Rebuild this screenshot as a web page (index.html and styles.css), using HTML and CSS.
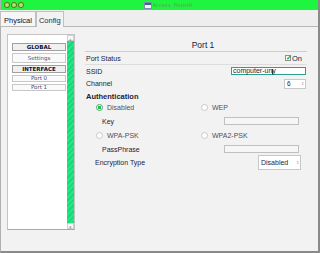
FILE: index.html
```html
<!DOCTYPE html>
<html lang="en">
<head>
  <meta charset="UTF-8" />
  <title>Access Point0</title>
  <link rel="stylesheet" href="styles.css">
</head>
<body>
  <div class="ventana">
    <div class="barra-titulo">
      <div class="botones">
        <span class="circulo"></span>
        <span class="circulo"></span>
        <span class="circulo"></span>
      </div>
      <div class="titulo">
        <span class="icono-ventana"></span>
        <span>Access Point0</span>
      </div>
    </div>

    <div class="pestanas">
      <div class="pestana">Physical</div>
      <div class="pestana activa">Config</div>
    </div>

    <div class="contenido">
      <div class="lateral">
        <div class="lista">
          <div class="item titulo-item">GLOBAL</div>
          <div class="item settings">Settings</div>
          <div class="item titulo-item">INTERFACE</div>
          <div class="item">Port 0</div>
          <div class="item">Port 1</div>
        </div>
        <div class="scroll">
          <div class="flecha">&#9652;</div>
          <div class="pista"></div>
          <div class="flecha">&#9662;</div>
        </div>
      </div>

      <div class="panel">
        <div class="encabezado">Port 1</div>

        <div class="fila linea">
          <span>Port Status</span>
          <label class="check"><span class="caja">&#10003;</span> On</label>
        </div>
        <div class="fila">
          <span>SSID</span>
          <span class="campo ssid">computer-uny<span class="cursor"></span></span>
        </div>
        <div class="fila">
          <span>Channel</span>
          <span class="selector canal">6 <span class="flechita">&#8661;</span></span>
        </div>

        <div class="subtitulo">Authentication</div>

        <div class="auth">
          <label class="opcion"><span class="radio marcado"></span>Disabled</label>
          <label class="opcion"><span class="radio"></span>WEP</label>

          <span class="etiqueta">Key</span>
          <span class="campo vacio"></span>

          <label class="opcion"><span class="radio"></span>WPA-PSK</label>
          <label class="opcion"><span class="radio"></span>WPA2-PSK</label>

          <span class="etiqueta">PassPhrase</span>
          <span class="campo vacio"></span>
        </div>

        <div class="fila cifrado">
          <span>Encryption Type</span>
          <span class="selector tipo">Disabled <span class="flechita">&#8661;</span></span>
        </div>
      </div>
    </div>
  </div>
</body>
</html>
```

FILE: styles.css
```css
body {
  margin: 0;
  padding: 0;
  font-family: "Liberation Sans", Arial, sans-serif;
  font-size: 7px;
  color: #1c1c3c;
  background: #f2f2f2;
  overflow: hidden;
}

.ventana {
  width: 320px;
  height: 253px;
  box-sizing: border-box;
  border-right: 2px solid #8a8a8a;
  border-bottom: 2px solid #8a8a8a;
  border-left: 1px solid #b0b0b0;
  background: #f2f2f2;
  display: flex;
  flex-direction: column;
}

.barra-titulo {
  height: 10px;
  background: #1ef53e;
  position: relative;
  display: flex;
  align-items: center;
}

.botones {
  display: flex;
  gap: 1px;
  padding-left: 3px;
}

.circulo {
  width: 6px;
  height: 6px;
  border-radius: 50%;
  background: #b6e070;
  box-shadow: inset 0 0 0 1px #4d7a1e;
}

.titulo {
  position: absolute;
  left: 144px;
  top: 2px;
  display: flex;
  align-items: center;
  gap: 2px;
  font-family: "DejaVu Sans Mono", monospace;
  font-size: 5px;
  color: #6f8f5a;
}

.icono-ventana {
  width: 6px;
  height: 5px;
  background: #f4f4f4;
  border-top: 2px solid #4060a0;
  box-shadow: 0 0 0 1px #8090a8;
  box-sizing: border-box;
}

.pestanas {
  height: 16px;
  display: flex;
  align-items: flex-end;
  border-bottom: 1px solid #b8b8b8;
  background: #eeeeee;
  margin-left: -1px;
}

.pestana {
  height: 15px;
  box-sizing: border-box;
  padding: 4px 3px 0;
  font-size: 7.5px;
  color: #101030;
  border: 1px solid #c0c0c0;
  border-bottom: none;
  background: #f6f6f6;
}

.pestana.activa {
  background: #f2f2f2;
  color: #2a2a4a;
  margin-bottom: -1px;
  height: 16px;
  padding: 4px 2px 0;
}

.contenido {
  flex: 1;
  display: flex;
  padding: 7px 0 0 6px;
}

.lateral {
  display: flex;
  height: 194px;
  border: 1px solid #c4c4c4;
  border-bottom-color: #a8a8a8;
}

.lista {
  width: 59px;
  background: #ffffff;
  padding: 8px 0 0 4px;
  box-sizing: border-box;
  display: flex;
  flex-direction: column;
  gap: 2px;
}

.item {
  width: 54px;
  height: 7px;
  box-sizing: border-box;
  border: 1px solid #c8c8c8;
  font-family: "DejaVu Sans", sans-serif;
  font-size: 5.5px;
  line-height: 5px;
  text-align: center;
  color: #505070;
  background: #fafafa;
}

.item.titulo-item {
  font-weight: bold;
  color: #101030;
  border-color: #a0a0a0;
  background: #f0f0f0;
  height: 8px;
  line-height: 6px;
}

.item.settings {
  height: 10px;
  line-height: 8px;
}

.scroll {
  width: 7px;
  display: flex;
  flex-direction: column;
  background: #f4f4f4;
}

.flecha {
  height: 6px;
  font-size: 5px;
  line-height: 6px;
  text-align: center;
  color: #a0a0a0;
  border: 1px solid #d0d0d0;
  box-sizing: border-box;
  background: #f8f8f8;
}

.pista {
  flex: 1;
  background: repeating-linear-gradient(135deg, #18d878 0 2px, #22e888 2px 4px);
}

.panel {
  width: 222px;
  margin-left: 10px;
  display: flex;
  flex-direction: column;
}

.encabezado {
  text-align: center;
  font-size: 8.5px;
  color: #202040;
  padding: 6px 0 1px 14px;
  border-bottom: 1px solid #cccccc;
}

.fila {
  height: 12px;
  display: flex;
  align-items: center;
  justify-content: space-between;
  padding: 0 1px;
}

.fila.linea {
  border-bottom: 1px solid #dddddd;
}

.check {
  display: flex;
  align-items: center;
  gap: 1px;
  font-size: 7.5px;
  margin-right: 4px;
}

.caja {
  width: 6px;
  height: 6px;
  background: #ffffff;
  border: 1px solid #909090;
  box-sizing: border-box;
  color: #1a9a2a;
  font-size: 7px;
  font-weight: bold;
  line-height: 4px;
  text-align: center;
}

.campo {
  height: 8px;
  box-sizing: border-box;
  border: 1px solid #c0c0c0;
  background: #f6f6f6;
}

.campo.ssid {
  width: 75px;
  border-color: #2aa090;
  background: #ffffff;
  font-size: 7px;
  line-height: 6px;
  padding-left: 1px;
  position: relative;
}

.cursor {
  position: absolute;
  left: 40px;
  top: 1px;
  width: 1px;
  height: 5px;
  background: #333;
}

.selector {
  height: 10px;
  box-sizing: border-box;
  border: 1px solid #c8c8c8;
  background: #ffffff;
  font-size: 6.5px;
  line-height: 8px;
  padding-left: 2px;
  display: flex;
  justify-content: space-between;
}

.flechita {
  font-size: 4px;
  color: #a0a0a0;
  padding-right: 1px;
}

.canal {
  width: 22px;
  margin-top: 2px;
}

.subtitulo {
  font-weight: bold;
  font-size: 7.5px;
  padding: 3px 1px 0;
  height: 11px;
  box-sizing: border-box;
}

.auth {
  display: grid;
  grid-template-columns: 105px 1fr;
  grid-auto-rows: 14px;
  align-items: center;
  padding-left: 11px;
}

.opcion {
  display: flex;
  align-items: center;
  gap: 4px;
  color: #505060;
}

.radio {
  width: 5px;
  height: 5px;
  border-radius: 50%;
  border: 1px solid #c8c8c8;
  background: #ffffff;
}

.radio.marcado {
  border-color: #50a070;
  background: radial-gradient(circle, #20c050 0 1.5px, #ffffff 2px);
}

.etiqueta {
  padding-left: 6px;
}

.campo.vacio {
  width: 75px;
  margin-left: 23px;
}

.cifrado {
  height: 12px;
  padding-left: 10px;
}

.tipo {
  width: 43px;
  height: 15px;
  line-height: 13px;
  margin-right: 5px;
  font-size: 7px;
}
```
